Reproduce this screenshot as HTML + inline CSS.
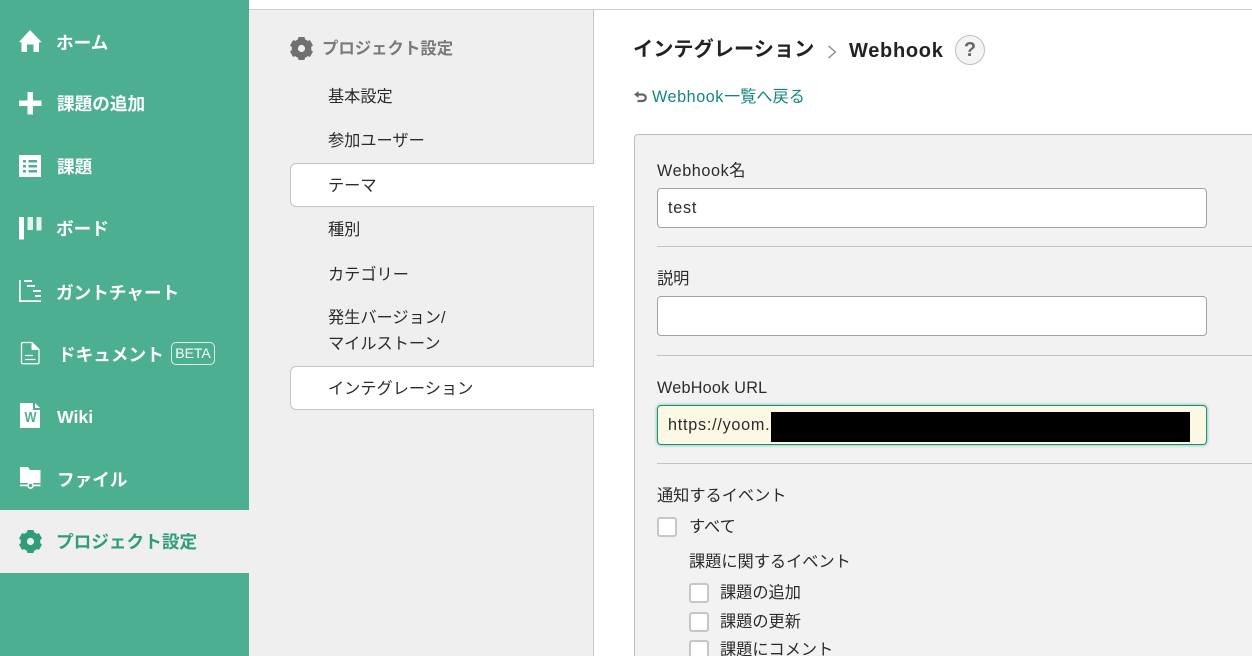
<!DOCTYPE html>
<html lang="ja"><head><meta charset="utf-8"><style>
html,body{margin:0;padding:0;width:1252px;height:656px;overflow:hidden;background:#fff}
body{position:relative;font-family:"Liberation Sans","Noto Sans CJK JP",sans-serif;font-size:16.2px;color:#2b2b2b}
.a,.t,.n,svg{position:absolute}
.t{white-space:nowrap;line-height:24px}
.n{left:56px;color:#fff;font-weight:700;font-size:17.65px;line-height:26px;white-space:nowrap}
.sep{position:absolute;left:657px;right:0;height:1px;background:#c4c4c4}
.inp{position:absolute;left:657px;width:548px;height:38px;background:#fff;border:1px solid #a3a3a3;border-radius:4px}
.cb{position:absolute;width:16px;height:16px;background:#fff;border:2px solid #c6c6c6;border-radius:3px}
.tab{position:absolute;left:290px;width:304px;background:#fff;border:1px solid #c4c4c4;border-right:0;border-radius:6px 0 0 6px;box-sizing:border-box}
</style></head><body>
<div class="a" style="left:0;top:0;width:249px;height:656px;background:#4caf91"></div>
<div class="a" style="left:0;top:510px;width:249px;height:63px;background:#efefef"></div>
<div class="a" style="left:249px;top:9px;width:1003px;height:1px;background:#cfcfcf"></div>
<div class="a" style="left:249px;top:10px;width:344px;height:646px;background:#efefef"></div>
<div class="a" style="left:593px;top:10px;width:1px;height:646px;background:#c4c4c4"></div>

<svg style="left:19px;top:30px" width="23" height="23" viewBox="0 0 23 23"><path fill="#fff" d="M11 0L22.500 12 20 12.500V22H14.500V14.500H8V22H2.500V12.500L0 12Z"/></svg>
<svg style="left:19px;top:92px" width="23" height="23" viewBox="0 0 23 23"><path fill="#fff" d="M8.500 0h5.500v8.500H22.500V14H14v8.500H8.500V14H0V8.500h8.500z"/></svg>
<svg style="left:19px;top:155px" width="23" height="23" viewBox="0 0 23 23"><path fill="#fff" fill-rule="evenodd" d="M0 0h22v22H0zM4 5v2.500H7V5zM9.500 5v2.500H18V5zM4 10v2.500H7V10zM9.500 10v2.500H18V10zM4 15v2.500H7V15zM9.500 15v2.500H18V15z"/></svg>
<svg style="left:19px;top:217px" width="23" height="23" viewBox="0 0 23 23"><path fill="#fff" d="M0 0h5v22.500H0z"/><path fill="#e4f3ee" d="M8.500 0h5.500v13H8.500zM17.500 0h5v13.500h-5z"/></svg>
<svg style="left:19px;top:280px" width="23" height="23" viewBox="0 0 23 23"><path fill="#fff" d="M0 0h1.700v20.300H22V22H0zM5 0h8v1.900H5zM8 5h8v1.900H8zM14 10h8v1.900H14zM16 15h6v1.900H16z"/></svg>
<svg style="left:20px;top:341px" width="20" height="24" viewBox="0 0 20 24"><path fill="none" stroke="#fff" stroke-width="1.300" stroke-linejoin="round" d="M1.500 3Q1.500 1.500 3 1.500H12L19 8.500V21.500Q19 22.700 17.500 22.700H3Q1.500 22.700 1.500 21.500Z"/><path fill="#fff" d="M11.500 1.500L19 9H12.500Q11.500 9 11.500 8Z"/><path fill="none" stroke="#fff" stroke-width="1.300" d="M5 14.500H13M5 18.500H15.500"/></svg>
<svg style="left:20px;top:403px" width="21" height="25" viewBox="0 0 21 25"><path fill="#fff" d="M0 0H13V7H20V25H0ZM15 0L20 5H15Z"/><text x="4.500" y="19" font-family="Liberation Sans" font-weight="700" font-size="14.500" fill="#4caf91" textLength="12" lengthAdjust="spacingAndGlyphs">W</text></svg>
<svg style="left:20px;top:467px" width="21" height="24" viewBox="0 0 21 24"><path fill="#fff" d="M0 0H8L10 3H20.500V16H0ZM0 17.500H7V19.300H0ZM14 17.500H20.500V19.300H14Z"/><circle cx="10.500" cy="18.500" r="2.600" fill="#4caf91" stroke="#fff" stroke-width="1.600"/></svg>
<svg style="left:19px;top:530px" width="23" height="23" viewBox="0 0 24 24" fill="#2f9c7b"><circle cx="12" cy="12" r="7" fill="none" stroke="#2f9c7b" stroke-width="6.500"/><rect x="8.500" y="0" width="7" height="5" rx="1"/><rect x="8.500" y="0" width="7" height="5" rx="1" transform="rotate(60 12 12)"/><rect x="8.500" y="0" width="7" height="5" rx="1" transform="rotate(120 12 12)"/><rect x="8.500" y="0" width="7" height="5" rx="1" transform="rotate(180 12 12)"/><rect x="8.500" y="0" width="7" height="5" rx="1" transform="rotate(240 12 12)"/><rect x="8.500" y="0" width="7" height="5" rx="1" transform="rotate(300 12 12)"/></svg>

<div class="n" style="top:30px">ホーム</div>
<div class="n" style="top:91px;left:57px">課題の追加</div>
<div class="n" style="top:154px;left:57px">課題</div>
<div class="n" style="top:216px">ボード</div>
<div class="n" style="top:280px">ガントチャート</div>
<div class="n" style="top:342px;left:58px">ドキュメント</div>
<div class="a" style="left:171px;top:342px;width:42px;height:21px;border:1px solid #dff1ea;border-radius:5px;color:#fff;font-size:14px;line-height:21px;text-align:center">BETA</div>
<div class="n" style="top:404px;left:57px">Wiki</div>
<div class="n" style="top:467px;left:57px">ファイル</div>
<div class="n" style="top:529px;color:#2f9c7b">プロジェクト設定</div>

<svg style="left:290px;top:37px" width="23" height="23" viewBox="0 0 24 24" fill="#707070"><circle cx="12" cy="12" r="7" fill="none" stroke="#707070" stroke-width="6.500"/><rect x="8.500" y="0" width="7" height="5" rx="1"/><rect x="8.500" y="0" width="7" height="5" rx="1" transform="rotate(60 12 12)"/><rect x="8.500" y="0" width="7" height="5" rx="1" transform="rotate(120 12 12)"/><rect x="8.500" y="0" width="7" height="5" rx="1" transform="rotate(180 12 12)"/><rect x="8.500" y="0" width="7" height="5" rx="1" transform="rotate(240 12 12)"/><rect x="8.500" y="0" width="7" height="5" rx="1" transform="rotate(300 12 12)"/></svg>
<div class="t" style="left:322px;top:37px;font-weight:700;color:#7a7a7a;font-size:16.4px">プロジェクト設定</div>
<div class="t" style="left:328px;top:85px">基本設定</div>
<div class="t" style="left:328px;top:129px">参加ユーザー</div>
<div class="tab" style="top:163px;height:44px"></div>
<div class="t" style="left:328px;top:174px">テーマ</div>
<div class="t" style="left:328px;top:218px">種別</div>
<div class="t" style="left:328px;top:263px">カテゴリー</div>
<div class="t" style="left:328px;top:306px">発生バージョン/</div>
<div class="t" style="left:328px;top:332px">マイルストーン</div>
<div class="tab" style="top:366px;height:44px"></div>
<div class="t" style="left:328px;top:377px">インテグレーション</div>

<div class="t" style="left:633px;top:38px;font-size:20.200px;font-weight:700;color:#222">インテグレーション</div>
<svg style="left:826px;top:44px" width="12" height="16" viewBox="0 0 12 16"><path fill="none" stroke="#8a8a8a" stroke-width="1.300" d="M2.500 2L9.500 8 2.500 14"/></svg>
<div class="t" style="left:849px;top:39px;font-size:20px;font-weight:700;color:#222;letter-spacing:.7px">Webhook</div>
<div class="a" style="left:955px;top:35px;width:28px;height:28px;border:1px solid #bdbdbd;border-radius:50%;background:#f4f4f4;color:#666;font-size:20px;font-weight:700;line-height:29px;text-align:center">?</div>
<svg style="left:634px;top:91px" width="13" height="12" viewBox="0 0 13 12"><path fill="none" stroke="#666" stroke-width="2.200" d="M3 3.500H8.500a3 3 0 0 1 0 6.500H3.500"/><path fill="#666" d="M0 3.500L4.500 0V7Z"/></svg>
<div class="t" style="left:652px;top:85px;color:#12877c"><span style="letter-spacing:.55px">Webhook</span>一覧へ戻る</div>

<div class="a" style="left:634px;top:134px;width:618px;height:522px;box-sizing:border-box;background:#f2f2f2;border:1px solid #bdbdbd;border-right:0;border-bottom:0;border-radius:4px 0 0 0"></div>
<div class="t" style="left:657px;top:159px"><span style="letter-spacing:.6px">Webhook</span>名</div>
<div class="inp" style="top:188px"></div>
<div class="t" style="left:668px;top:196px;letter-spacing:.75px">test</div>
<div class="sep" style="top:246px"></div>
<div class="t" style="left:657px;top:267px">説明</div>
<div class="inp" style="top:296px"></div>
<div class="sep" style="top:355px"></div>
<div class="t" style="left:657px;top:376px;letter-spacing:.25px">WebHook URL</div>
<div class="inp" style="top:405px;background:#fbf9e3;border-color:#1f8f72;box-shadow:0 0 3px #5fb9a0"></div>
<div class="t" style="left:668px;top:413px;letter-spacing:.75px">https://yoom.</div>
<div class="a" style="left:771px;top:412px;width:419px;height:30px;background:#000"></div>
<div class="sep" style="top:463px"></div>
<div class="t" style="left:657px;top:484px">通知するイベント</div>
<div class="cb" style="left:657px;top:517px"></div>
<div class="t" style="left:689px;top:515px">すべて</div>
<div class="t" style="left:689px;top:550px">課題に関するイベント</div>
<div class="cb" style="left:689px;top:583px"></div>
<div class="t" style="left:720px;top:581px">課題の追加</div>
<div class="cb" style="left:689px;top:612px"></div>
<div class="t" style="left:720px;top:610px">課題の更新</div>
<div class="cb" style="left:689px;top:640px"></div>
<div class="t" style="left:720px;top:638px">課題にコメント</div>
</body></html>
